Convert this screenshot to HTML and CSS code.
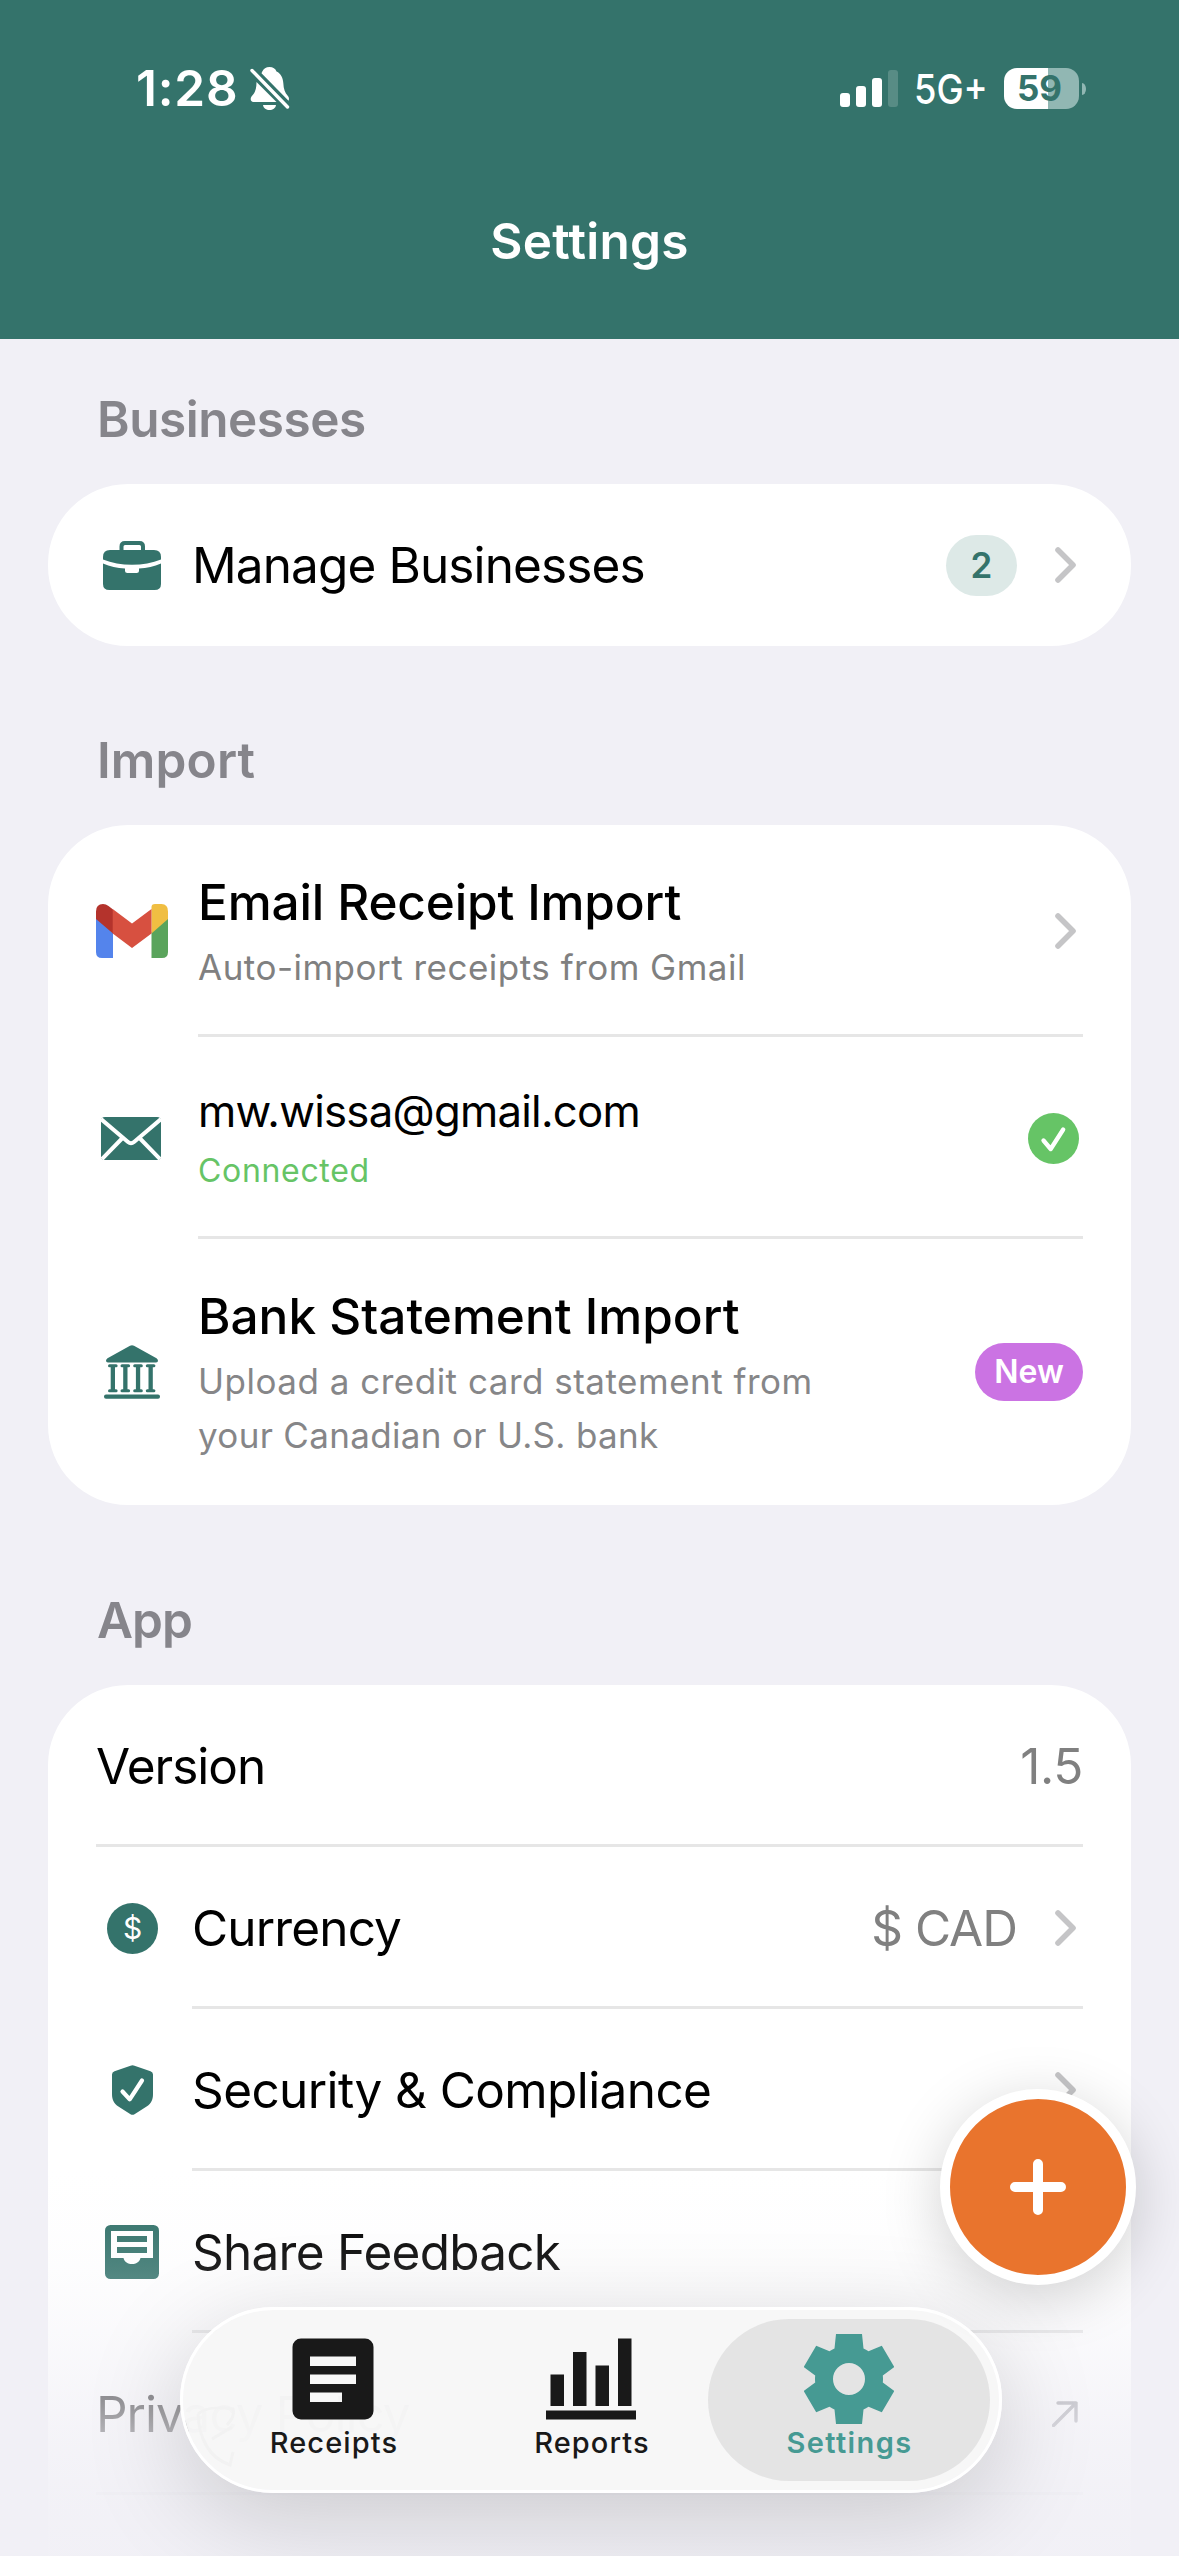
FILE: index.html
```html
<!DOCTYPE html>
<html lang="en">
<head>
<meta charset="utf-8">
<title>Settings</title>
<meta name="viewport" content="width=device-width, initial-scale=1">
<link rel="stylesheet" href="styles.css">
</head>
<body>
<div class="screen">
  <header class="header">
    <div class="status">
      <div class="status-left">
        <span class="clock">1:28</span>
        <svg class="bell" viewBox="0 0 40 44" width="40" height="44">
          <path d="M12 6C13.500 2.500 16 1 19.500 1S25.500 2.500 26.500 5.500C31 7.500 33 12 33.300 17C33.600 23 35 27 37.500 29.500C39 31 39.500 33 38.500 34.800L11.500 7.200Z" fill="#fff"/>
          <path d="M6.500 16L26.500 36H3.500C.500 36 0 32.500 1.500 30.500C4.500 27.500 6.500 24 6.500 16Z" fill="#fff"/>
          <path d="M13 39H26C25.500 42.500 22.800 44 19.500 44S13.500 42.500 13 39Z" fill="#fff"/>
          <path d="M2 4.500L37.500 41" stroke="#34736b" stroke-width="7" fill="none"/>
          <path d="M2 4.500L37.500 41" stroke="#fff" stroke-width="3.400" stroke-linecap="round" fill="none"/>
        </svg>
      </div>
      <div class="status-right">
        <svg class="bars" viewBox="0 0 58 37" width="58" height="37" fill="#fff">
          <rect x="0" y="23" width="10" height="14" rx="3"/>
          <rect x="16" y="16" width="10" height="21" rx="3"/>
          <rect x="32" y="8" width="10" height="29" rx="3"/>
          <rect x="48" y="0" width="10" height="37" rx="3" opacity=".18"/>
        </svg>
        <span class="network">5G+</span>
        <span class="battery"><span class="battery-level">59</span></span>
      </div>
    </div>
    <h1 class="title">Settings</h1>
  </header>

  <main class="content">
    <h2 class="section first">Businesses</h2>
    <section class="card">
      <div class="row">
        <span class="icon">
          <svg viewBox="0 0 58 49" width="58" height="49" fill="#34736b">
            <path d="M18.500 10V5.500Q18.500 2 22 2H36.500Q40 2 40 5.500V10" fill="none" stroke="#34736b" stroke-width="4"/>
            <path d="M0 18.500V16Q0 9 7 9H51Q58 9 58 16V18.500C41 25.500 17 25.500 0 18.500Z"/>
            <path d="M0 22.500C7 25.500 14 27 22 27.600V29.500Q22 32 24.500 32H33.500Q36 32 36 29.500V27.600C44 27 51 25.500 58 22.500V43Q58 49 51.500 49H6.500Q0 49 0 43Z"/>
          </svg>
        </span>
        <span class="label w-manage">Manage Businesses</span>
        <span class="count">2</span>
        <svg class="chevron" viewBox="0 0 21 36" width="21" height="36"><path d="M3 3L18 18L3 33"/></svg>
      </div>
    </section>

    <h2 class="section imp">Import</h2>
    <section class="card">
      <div class="row wide r-mail">
        <span class="icon">
          <svg viewBox="0 0 72 54" width="72" height="54">
            <path d="M0 14L17 28V54H6Q0 54 0 48Z" fill="#5484ec"/>
            <path d="M72 14L55.500 28V54H66Q72 54 72 48Z" fill="#5aa45c"/>
            <path d="M0 15V7.500Q0 0 7 0Q10 0 12.500 2L17 5.500V29.500Z" fill="#b4332c"/>
            <path d="M72 15V7.500Q72 0 65.500 0H59Q55.500 0 55.500 3V29.500Z" fill="#f0be42"/>
            <path d="M16.700 5L36 19.500L55.500 5V29.500L36 44L16.700 29.500Z" fill="#d75040"/>
          </svg>
        </span>
        <div class="texts">
          <span class="heading w-email">Email Receipt Import</span>
          <span class="sub w-auto">Auto-import receipts from Gmail</span>
        </div>
        <svg class="chevron" viewBox="0 0 21 36" width="21" height="36"><path d="M3 3L18 18L3 33"/></svg>
      </div>
      <div class="row wide r-account">
        <span class="icon envelope">
          <svg viewBox="0 0 60 43" width="60" height="43">
            <rect width="60" height="43" rx="4" fill="#34736b"/>
            <path d="M0 2L27 25Q30 27.500 33 25L60 2M21 21.500L1 42M39 21.500L59 42" fill="none" stroke="#fff" stroke-width="4"/>
          </svg>
        </span>
        <div class="texts">
          <span class="account">mw.wissa@gmail.com</span>
          <span class="connected">Connected</span>
        </div>
        <svg class="check" viewBox="0 0 51 51" width="51" height="51">
          <circle cx="25.500" cy="25.500" r="25.500" fill="#66c466"/>
          <path d="M15.500 27.500L22.700 36L35.200 16.500" fill="none" stroke="#fff" stroke-width="4.300" stroke-linecap="round" stroke-linejoin="round"/>
        </svg>
      </div>
      <div class="row wide r-bank">
        <span class="icon">
          <svg viewBox="0 0 56 54" width="56" height="54" fill="#34736b">
            <path d="M26 .800Q28 -.500 30 .800L52.500 13.200Q54 14.300 54 15.800Q54 17.500 52 17.500H4Q2 17.500 2 15.800Q2 14.300 3.500 13.200Z"/>
            <g id="col"><rect x="6.700" y="20" width="4.300" height="27"/><rect x="4" y="19.300" width="9.600" height="3" rx="1.500"/><rect x="4" y="44.300" width="9.600" height="3" rx="1.500"/></g>
            <use href="#col" x="12.500"/><use href="#col" x="25.200"/><use href="#col" x="37.800"/>
            <rect y="49.500" width="56" height="4.200" rx="2"/>
          </svg>
        </span>
        <div class="texts">
          <span class="heading w-bank">Bank Statement Import</span>
          <span class="sub w-upload">Upload a credit card statement from</span>
          <span class="sub w-your">your Canadian or U.S. bank</span>
        </div>
        <span class="new">New</span>
      </div>
    </section>

    <h2 class="section app">App</h2>
    <section class="card last">
      <div class="row full">
        <span class="label w-version">Version</span>
        <span class="value edge">1.5</span>
      </div>
      <div class="row">
        <span class="icon">
          <svg viewBox="0 0 51 51" width="51" height="51">
            <circle cx="25.500" cy="25.500" r="25.500" fill="#34736b"/>
            <text class="dollar" x="25.500" y="36" text-anchor="middle">$</text>
          </svg>
        </span>
        <span class="label w-currency">Currency</span>
        <span class="value w-cad">$ CAD</span>
        <svg class="chevron" viewBox="0 0 21 36" width="21" height="36"><path d="M3 3L18 18L3 33"/></svg>
      </div>
      <div class="row">
        <span class="icon">
          <svg viewBox="0 0 41 50" width="41" height="50">
            <path d="M18.500 .700Q20.500 -.100 22.500 .700L38.500 6.200Q41 7.200 41 9.500V29C41 35 39 38.500 35 41.200L22.500 49.300Q20.500 50.300 18.500 49.300L6 41.200C2 38.500 0 35 0 29V9.500Q0 7.200 2.500 6.200Z" fill="#34736b"/>
            <path d="M10.500 26.500L17.700 34.300L30 15.500" fill="none" stroke="#fff" stroke-width="4.200" stroke-linecap="round" stroke-linejoin="round"/>
          </svg>
        </span>
        <span class="label w-security">Security &amp; Compliance</span>
        <svg class="chevron" viewBox="0 0 21 36" width="21" height="36"><path d="M3 3L18 18L3 33"/></svg>
      </div>
      <div class="row">
        <span class="icon">
          <svg viewBox="0 0 54 54" width="54" height="54">
            <rect width="54" height="54" rx="5.500" fill="#34736b"/>
            <path d="M6 6H48V33H35.500C34.500 37 31 39 27 39S19.500 37 18.500 33H6Z" fill="#fff"/>
            <path d="M12 11H42V17H12ZM12 22H42V28H12Z" fill="#34736b"/>
          </svg>
        </span>
        <span class="label w-share">Share Feedback</span>
      </div>
      <div class="row full">
        <span class="label w-version">Privacy Policy</span>
        <svg class="outlink" viewBox="0 0 26 26" width="26" height="26"><path d="M1.500 24.500L24 2M6 2H24V20" /></svg>
      </div>
    </section>
  </main>

  <div class="fade"></div>

  <nav class="tabbar">
    <svg class="refraction" viewBox="0 0 50 70" width="50" height="70"><path d="M3 12C10 5 24 5 38 7C40 14 36 18 32 23M3 12C4 36 14 56 35 63L38 50M17 37L37 25"/></svg>
    <div class="tab">
      <svg viewBox="0 0 90 90" width="90" height="90">
        <path fill-rule="evenodd" fill="#191919" d="M13 4.500H77A8.500 8.500 0 0 1 85.500 13V77A8.500 8.500 0 0 1 77 85.500H13A8.500 8.500 0 0 1 4.500 77V13A8.500 8.500 0 0 1 13 4.500ZM22 22.500V32H68V22.500ZM22 40.500V50H68V40.500ZM22 58.500V68H54V58.500Z"/>
      </svg>
      <span class="tab-label">Receipts</span>
    </div>
    <div class="tab">
      <svg viewBox="0 0 90 90" width="90" height="90" fill="#191919">
        <rect x="4.500" y="40.500" width="13.500" height="31.500"/>
        <rect x="27" y="18" width="13.500" height="54"/>
        <rect x="49.500" y="31.500" width="13.500" height="40.500"/>
        <rect x="72" y="4.500" width="13.500" height="67.500"/>
        <rect x="0" y="76.500" width="90" height="9"/>
      </svg>
      <span class="tab-label">Reports</span>
    </div>
    <div class="tab active">
      <svg viewBox="-45 -45 90 90" width="90" height="90" class="gear">
        <path fill-rule="evenodd" fill="#469a93" d="M-13 -45H13L14.500 -30.500Q17 -29.500 19.500 -27.800L32.800 -33.300L45.300 -12L33.800 -3.500Q34.200 0 33.800 3.500L45.300 12L32.800 33.300L19.500 27.800Q17 29.500 14.500 30.500L13 45H-13L-14.500 30.500Q-17 29.500 -19.500 27.800L-32.800 33.300L-45.300 12L-33.800 3.500Q-34.200 0 -33.800 -3.500L-45.300 -12L-32.800 -33.300L-19.500 -27.800Q-17 -29.500 -14.500 -30.500ZM16 0A16 16 0 1 0 -16 0A16 16 0 1 0 16 0Z"/>
      </svg>
      <span class="tab-label">Settings</span>
    </div>
  </nav>

  <button class="fab" aria-label="Add">
    <svg viewBox="0 0 56 56" width="56" height="56"><path d="M28 5V51M5 28H51"/></svg>
  </button>
</div>
</body>
</html>
```
FILE: styles.css
```css
* { box-sizing: border-box; }

body {
  margin: 0;
  background: #f1f0f6;
  font-family: Inter, "Liberation Sans", sans-serif;
}

svg { display: block; flex: none; }

.screen {
  position: relative;
  width: 1179px;
  height: 2556px;
  overflow: hidden;
  background: #f1f0f6;
}

/* Header */
.header {
  height: 339px;
  background: #34736b;
  color: #fff;
}
.status {
  display: flex;
  justify-content: space-between;
  align-items: center;
  height: 176px;
  padding: 0 93px 0 136px;
}
.status-left,
.status-right {
  display: flex;
  align-items: center;
}
.status-left { gap: 12px; }
.clock {
  font-size: 49.5px;
  font-weight: 600;
  letter-spacing: .8px;
  line-height: 60px;
}
.bars { margin-right: 16px; }
.network {
  width: 90px;
  font-size: 41.5px;
  font-weight: 500;
  line-height: 50px;
  padding-top: 1px;
  transform: scaleX(.875);
  transform-origin: left;
}
.battery {
  position: relative;
  width: 75px;
  height: 41px;
  margin-right: 7px;
  border-radius: 13px;
  background: linear-gradient(90deg, #fff 44px, #91b7b3 44px);
  color: #34736b;
}
.battery::after {
  content: "";
  position: absolute;
  right: -7px;
  top: 15px;
  width: 4px;
  height: 12px;
  border-radius: 0 4px 4px 0 / 0 6px 6px 0;
  background: #91b7b3;
}
.battery-level {
  display: block;
  padding-left: 13px;
  font-size: 35px;
  font-weight: 700;
  line-height: 41px;
}
.title {
  margin: 35px 0 0;
  text-align: center;
  font-size: 49.5px;
  font-weight: 600;
  letter-spacing: .28px;
  line-height: 60px;
}

/* Sections */
.content { padding: 0 48px; }
.section {
  margin: 0;
  padding: 83px 0 34px 49px;
  font-size: 49.5px;
  font-weight: 600;
  line-height: 62px;
  color: #86858b;
}
.section.first { padding-top: 49px; letter-spacing: -.48px; }
.section.imp { letter-spacing: .15px; }
.section.app { padding-top: 84px; letter-spacing: -.95px; }

.card {
  padding: 0 48px;
  border-radius: 80px;
  background: #fff;
}
.card.last {
  height: 980px;
  border-radius: 80px 80px 0 0;
}

.row {
  position: relative;
  display: flex;
  align-items: center;
  height: 162px;
}
.row:not(:last-child)::after,
.card.last .row::after {
  content: "";
  position: absolute;
  left: 96px;
  right: 0;
  bottom: 0;
  height: 3px;
  background: #e6e6e6;
}
.card.last .row.full::after { left: 0; }
.row.wide:not(:last-child)::after { left: 102px; }
.r-mail { height: 212px; }
.r-account { height: 202px; }
.r-bank { height: 266px; }

.icon {
  display: flex;
  justify-content: center;
  width: 72px;
  margin-right: 24px;
}
.wide .icon { margin-right: 30px; }
.icon.envelope { padding-right: 2px; }

.label {
  flex: 1;
  font-size: 49.5px;
  line-height: 62px;
  color: #000;
  white-space: nowrap;
}
.w-manage { letter-spacing: -.89px; }
.w-version { letter-spacing: -1px; }
.w-currency { letter-spacing: -.85px; }
.w-security { letter-spacing: -.6px; }
.w-share { letter-spacing: -.75px; }

.value {
  margin-right: 38px;
  font-size: 49.5px;
  line-height: 62px;
  color: #808080;
}
.value.edge { margin-right: 0; letter-spacing: -.35px; }
.w-cad { letter-spacing: -1px; }

.chevron { margin-right: 7px; }
.chevron path {
  fill: none;
  stroke: #c5c5c7;
  stroke-width: 5.6;
  stroke-linecap: round;
  stroke-linejoin: round;
}

.count {
  width: 71px;
  height: 61px;
  margin-right: 38px;
  border-radius: 31px;
  background: #dde9e7;
  color: #34736b;
  text-align: center;
  font-size: 35px;
  font-weight: 600;
  line-height: 61px;
}

.texts {
  display: flex;
  flex-direction: column;
  flex: 1;
  align-self: flex-start;
  padding-top: 46px;
  white-space: nowrap;
}
.heading {
  margin-bottom: 7px;
  font-size: 49.5px;
  font-weight: 500;
  line-height: 62px;
}
.sub {
  font-size: 35px;
  line-height: 54.3px;
  color: #868688;
}
.w-email { letter-spacing: -.15px; }
.w-bank { letter-spacing: 0; }
.w-auto { letter-spacing: .49px; color: #808080; }
.w-upload { letter-spacing: .5px; }
.w-your { letter-spacing: .33px; }
.r-account .texts { padding-top: 45px; }
.account {
  margin-bottom: 7px;
  font-size: 43.7px;
  letter-spacing: -.74px;
  line-height: 60px;
}
.connected {
  font-size: 32px;
  letter-spacing: .67px;
  line-height: 44px;
  color: #66c466;
}
.check { margin-right: 4px; }

.new {
  width: 108px;
  height: 58px;
  border-radius: 29px;
  background: #cb73e3;
  color: #fff;
  text-align: center;
  font-size: 32px;
  font-weight: 600;
  line-height: 57px;
}

.dollar {
  font: 400 30px Inter, sans-serif;
  fill: #fff;
}

.outlink { margin-right: 5px; }
.outlink path {
  fill: none;
  stroke: #8f8f96;
  stroke-width: 3.4;
  stroke-linecap: round;
  stroke-linejoin: round;
}

/* Content dissolves towards the bottom edge */
.fade {
  position: absolute;
  left: 0;
  right: 0;
  bottom: 0;
  height: 386px;
  background: linear-gradient(
    rgba(241, 240, 246, 0) 0,
    rgba(241, 240, 246, .06) 60px,
    rgba(241, 240, 246, .14) 100px,
    rgba(241, 240, 246, .3) 150px,
    rgba(241, 240, 246, .62) 232px,
    rgba(241, 240, 246, .74) 262px,
    rgba(241, 240, 246, .9) 325px,
    rgba(241, 240, 246, .97) 386px
  );
}

/* Floating tab bar */
.tabbar {
  position: absolute;
  left: 180px;
  top: 2307px;
  width: 822px;
  height: 186px;
  display: flex;
  justify-content: center;
  padding-top: 9px;
  border: 3px solid #fff;
  border-radius: 93px;
  background: rgba(247, 247, 247, .965);
  background-clip: padding-box;
  box-shadow: 0 24px 100px rgba(0, 0, 0, .17);
}
.refraction {
  position: absolute;
  left: 12px;
  top: 92px;
}
.refraction path {
  fill: none;
  stroke: #f2f2f2;
  stroke-width: 3;
}
.tab {
  position: relative;
  display: flex;
  flex-direction: column;
  align-items: center;
  width: 258px;
  height: 162px;
  padding-top: 15px;
  color: #191919;
}
.tab svg { position: relative; }
.tab-label {
  position: relative;
  padding-left: 2px;
  font-size: 29px;
  font-weight: 500;
  letter-spacing: 1.13px;
  line-height: 37px;
}
.tab.active { color: #469a93; }
.tab.active .tab-label {
  padding-left: 1px;
  font-weight: 600;
  letter-spacing: 1.4px;
}
.tab.active::before {
  content: "";
  position: absolute;
  inset: 0 -12px;
  border-radius: 81px;
  background: #e4e4e4;
}

/* Floating add button */
.fab {
  position: absolute;
  left: 940px;
  top: 2089px;
  width: 196px;
  height: 196px;
  display: flex;
  align-items: center;
  justify-content: center;
  padding: 0;
  border: 10px solid #fff;
  border-radius: 50%;
  background: #e9742d;
  box-shadow: 0 12px 60px rgba(0, 0, 0, .18);
}
.fab path {
  fill: none;
  stroke: #fff;
  stroke-width: 10;
  stroke-linecap: round;
}
```
